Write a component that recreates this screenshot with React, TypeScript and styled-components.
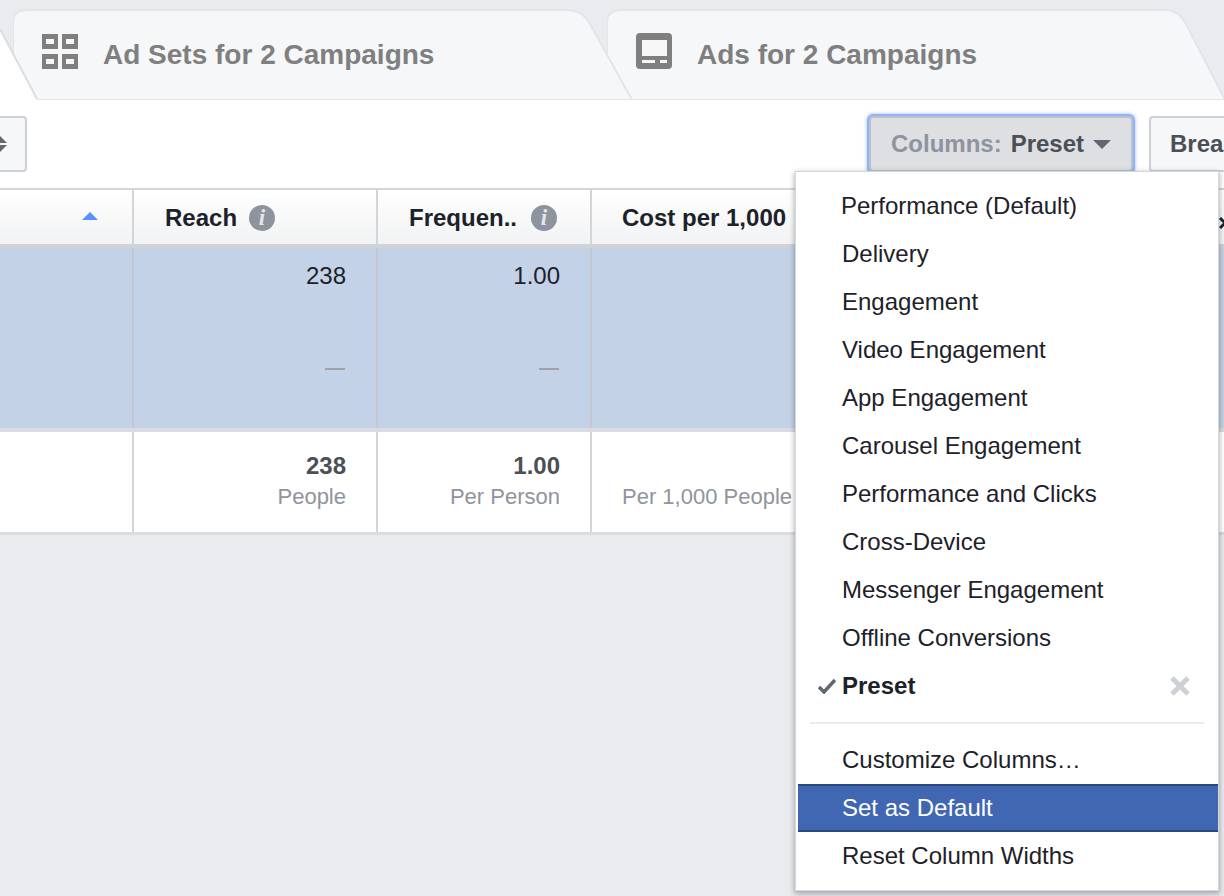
import React from 'react';
import styled, { createGlobalStyle } from 'styled-components';

const GlobalStyle = createGlobalStyle`
  html, body {
    margin: 0;
    padding: 0;
    background: #e9ebee;
  }
  body {
    font-family: "Liberation Sans", Arial, sans-serif;
    color: #1d2129;
  }
`;

const Page = styled.div`
  position: relative;
  width: 1224px;
  height: 896px;
  overflow: hidden;
  background: #e9ebee;
`;

const TabBar = styled.div`
  position: relative;
  display: flex;
  height: 100px;
`;

const TabShape = styled.svg`
  position: absolute;
  left: 0;
  top: 0;
`;

const Tab = styled.div<{ $width: number; $left: number; $z: number }>`
  position: relative;
  z-index: ${(p) => p.$z};
  flex: none;
  width: ${(p) => p.$width}px;
  margin-left: ${(p) => p.$left}px;
  height: 100px;
`;

const TabLabel = styled.div<{ $pad: number; $gap: number }>`
  position: relative;
  display: flex;
  align-items: center;
  gap: ${(p) => p.$gap}px;
  height: 100px;
  padding: 10px 0 0 ${(p) => p.$pad}px;
  box-sizing: border-box;
  font-size: 28px;
  font-weight: 700;
  color: #7f7f7f;
  white-space: nowrap;

  svg {
    margin-bottom: 8px;
  }
`;

const Toolbar = styled.div`
  display: flex;
  align-items: center;
  height: 88px;
  background: #fff;
  padding-bottom: 1px;
  box-sizing: border-box;
`;

const SortButton = styled.div`
  flex: none;
  display: flex;
  align-items: center;
  width: 27px;
  height: 56px;
  margin-right: 842px;
  box-sizing: border-box;
  background: #f6f7f9;
  border: 2px solid #ced0d4;
  border-left: 0;
  border-radius: 0 4px 4px 0;
`;

const ColumnsButton = styled.div`
  flex: none;
  display: flex;
  align-items: center;
  width: 264px;
  height: 56px;
  box-sizing: border-box;
  padding-left: 20px;
  background: #dddfe2;
  border: 2px solid #bcc0c8;
  border-radius: 4px;
  box-shadow: 0 0 0 2px #8fb3fb, 0 0 3px 3px rgba(120, 160, 250, 0.45);
  font-size: 24px;
  font-weight: 700;
  color: #8d949e;
  white-space: nowrap;
`;

const ButtonValue = styled.span`
  margin-left: 9px;
  color: #4b4f56;
`;

const Caret = styled.span`
  width: 0;
  height: 0;
  margin: 2px 0 0 9px;
  border-left: 9px solid transparent;
  border-right: 9px solid transparent;
  border-top: 9px solid #606770;
`;

const BreakButton = styled.div`
  flex: none;
  width: 100px;
  height: 56px;
  margin-left: 16px;
  box-sizing: border-box;
  padding-left: 19px;
  background: #f6f7f9;
  border: 2px solid #ced0d4;
  border-radius: 4px;
  font-size: 24px;
  font-weight: 700;
  line-height: 52px;
  color: #4b4f56;
`;

const columns = '134px 244px 214px 1fr';

const HeaderRow = styled.div`
  display: grid;
  grid-template-columns: ${columns};
  height: 56px;
  box-sizing: border-box;
  border-top: 2px solid #d3d5d8;
  background: linear-gradient(#ffffff, #f1f2f3);
`;

const HeaderCell = styled.div<{ $end?: boolean }>`
  display: flex;
  align-items: center;
  justify-content: ${(p) => (p.$end ? 'flex-end' : 'flex-start')};
  gap: 12px;
  box-sizing: border-box;
  padding: 2px ${(p) => (p.$end ? '34px' : '0')} 0 ${(p) => (p.$end ? '0' : '31px')};
  border-right: 2px solid #d3d5d8;
  font-size: 24px;
  font-weight: 700;
  color: #1d2129;
  white-space: nowrap;

  &:last-child {
    border-right: 0;
    padding-left: 30px;
  }
`;

const SortArrow = styled.span`
  width: 0;
  height: 0;
  margin-bottom: 4px;
  border-left: 8px solid transparent;
  border-right: 8px solid transparent;
  border-bottom: 8px solid #5890ff;
`;

const HeaderClose = styled.svg`
  position: absolute;
  left: 1219px;
  top: 217px;
`;

const InfoBadge = styled.span<{ $shift?: number }>`
  display: inline-flex;
  align-items: center;
  justify-content: center;
  width: 26px;
  height: 26px;
  margin-left: ${(p) => p.$shift ?? 0}px;
  border-radius: 50%;
  background: #8d949e;
  color: #e4e6e9;
  font-family: "Liberation Serif", serif;
  font-size: 23px;
  font-style: italic;
  font-weight: 700;
`;

const DataRow = styled.div`
  display: grid;
  grid-template-columns: ${columns};
  height: 184px;
  box-sizing: border-box;
  background: #c4d2e7;
  border-top: 4px solid #d0d2d5;
`;

const TotalRow = styled.div`
  display: grid;
  grid-template-columns: ${columns};
  height: 107px;
  box-sizing: border-box;
  background: #fff;
  border-top: 4px solid #d9dde2;
  border-bottom: 3px solid #dadcdf;
`;

const Cell = styled.div<{ $selected?: boolean; $start?: boolean }>`
  display: flex;
  flex-direction: column;
  align-items: ${(p) => (p.$start ? 'flex-start' : 'flex-end')};
  box-sizing: border-box;
  padding: 14px ${(p) => (p.$start ? '0 0 30px' : '30px 0 0')};
  border-right: 2px solid ${(p) => (p.$selected ? '#c4c8ce' : '#d3d5d8')};

  &:last-child {
    border-right: 0;
  }
`;

const Value = styled.div`
  font-size: 24px;
  line-height: 28px;
  color: #1d2129;
`;

const Dash = styled.div`
  width: 20px;
  height: 2px;
  margin: 78px 1px 0 0;
  background: #a0a2a6;
`;

const TotalValue = styled.div`
  margin-top: 6px;
  font-size: 24px;
  font-weight: 700;
  line-height: 28px;
  color: #4b4f56;
`;

const TotalUnit = styled.div`
  margin-top: 4px;
  font-size: 22px;
  line-height: 26px;
  color: #90949c;
  white-space: nowrap;
`;

const Menu = styled.div`
  position: absolute;
  z-index: 5;
  left: 795px;
  top: 171px;
  width: 424px;
  height: 720px;
  box-sizing: border-box;
  padding: 10px 0 0;
  background: #fff;
  border: 1px solid #d5d7da;
  box-shadow: 0 2px 5px 1px rgba(0, 0, 0, 0.28);
`;

const MenuItem = styled.div<{ $active?: boolean; $strong?: boolean; $nudge?: number }>`
  display: flex;
  align-items: center;
  height: 48px;
  box-sizing: border-box;
  margin-left: 2px;
  padding-left: ${(p) => 44 - (p.$nudge ?? 0)}px;
  padding-right: 27px;
  font-size: 24px;
  font-weight: ${(p) => (p.$strong ? 700 : 400)};
  color: ${(p) => (p.$active ? '#fff' : '#1d2129')};
  background: ${(p) => (p.$active ? '#4267b2' : 'transparent')};
  border-top: ${(p) => (p.$active ? '2px solid #29487d' : '0')};
  border-bottom: ${(p) => (p.$active ? '2px solid #29487d' : '0')};
  white-space: nowrap;
`;

const CheckSlot = styled.svg`
  width: 18px;
  height: 16px;
  margin-left: -24px;
  margin-right: 6px;
  flex: none;
`;

const RemoveIcon = styled.svg`
  width: 22px;
  height: 22px;
  margin-left: auto;
  flex: none;
`;

const MenuDivider = styled.div`
  height: 2px;
  margin: 12px 14px 12px 14px;
  background: #e9ebee;
`;

const TabOutline = ({ d, fill, line }: { d: string; fill: string; line: string }) => (
  <TabShape width="660" height="100" viewBox="0 0 660 100">
    <path d={d} fill={fill} stroke={line} strokeWidth="2" />
  </TabShape>
);

const GridIcon = () => (
  <svg width="36" height="36" viewBox="0 0 36 36">
    <path
      fillRule="evenodd"
      fill="#7f7f7f"
      d="M0 1H16V16H0Z M4 6V11H12V6Z M20 1H36V16H20Z M24 6V11H32V6Z M0 21H16V36H0Z M4 26V31H12V26Z M20 21H36V36H20Z M24 26V31H32V26Z"
    />
  </svg>
);

const AdIcon = () => (
  <svg width="36" height="36" viewBox="0 0 36 36">
    <rect width="36" height="36" rx="4" fill="#7f7f7f" />
    <rect x="6" y="7" width="25" height="16" fill="#f6f7f9" />
    <rect x="6" y="27" width="13" height="3" fill="#f6f7f9" />
    <rect x="24" y="27" width="7" height="3" fill="#f6f7f9" />
  </svg>
);

const SortChevrons = () => (
  <svg width="7" height="18" viewBox="0 0 7 18">
    <path d="M0 1 L7 8 H0 Z" fill="#606770" />
    <path d="M0 17 L7 10 H0 Z" fill="#606770" />
  </svg>
);

const App = () => {
  const menuItems = [
    'Delivery',
    'Engagement',
    'Video Engagement',
    'App Engagement',
    'Carousel Engagement',
    'Performance and Clicks',
    'Cross-Device',
    'Messenger Engagement',
    'Offline Conversions',
  ];

  return (
    <Page>
      <GlobalStyle />
      <TabBar>
        <Tab $width={0} $left={0} $z={3}>
          <TabOutline d="M-2 26 L37 99 L37 100 H-2 Z" fill="#fff" line="none" />
          <TabShape width="60" height="100" viewBox="0 0 60 100">
            <path d="M0 29 L37 99" fill="none" stroke="#dcdee2" strokeWidth="2" />
          </TabShape>
        </Tab>
        <Tab $width={620} $left={13} $z={2}>
          <TabOutline
            d="M0 100 V22 Q0 10 16 10 H552 Q570 10 577 24 L618 98 L619 100 Z"
            fill="#f6f7f9"
            line="#e3e5e8"
          />
          <TabLabel $pad={29} $gap={25}>
            <GridIcon />
            Ad Sets for 2 Campaigns
          </TabLabel>
        </Tab>
        <Tab $width={618} $left={-26} $z={1}>
          <TabOutline
            d="M0 100 V22 Q0 10 16 10 H556 Q572 10 579 24 L617 98 L618 100 Z"
            fill="#f6f7f9"
            line="#e3e5e8"
          />
          <TabLabel $pad={29} $gap={25}>
            <AdIcon />
            Ads for 2 Campaigns
          </TabLabel>
        </Tab>
      </TabBar>
      <Toolbar>
        <SortButton>
          <SortChevrons />
        </SortButton>
        <ColumnsButton>
          Columns:
          <ButtonValue>Preset</ButtonValue>
          <Caret />
        </ColumnsButton>
        <BreakButton>Breakdown</BreakButton>
      </Toolbar>
      <HeaderRow>
        <HeaderCell $end>
          <SortArrow />
        </HeaderCell>
        <HeaderCell>
          Reach
          <InfoBadge>i</InfoBadge>
        </HeaderCell>
        <HeaderCell>
          Frequen..
          <InfoBadge $shift={2}>i</InfoBadge>
        </HeaderCell>
        <HeaderCell>Cost per 1,000</HeaderCell>
      </HeaderRow>
      <HeaderClose width="12" height="12" viewBox="0 0 12 12">
        <path d="M1 1 L11 11 M11 1 L1 11" stroke="#1d2129" strokeWidth="3" />
      </HeaderClose>
      <DataRow>
        <Cell $selected />
        <Cell $selected>
          <Value>238</Value>
          <Dash />
        </Cell>
        <Cell $selected>
          <Value>1.00</Value>
          <Dash />
        </Cell>
        <Cell $selected />
      </DataRow>
      <TotalRow>
        <Cell />
        <Cell>
          <TotalValue>238</TotalValue>
          <TotalUnit>People</TotalUnit>
        </Cell>
        <Cell>
          <TotalValue>1.00</TotalValue>
          <TotalUnit>Per Person</TotalUnit>
        </Cell>
        <Cell $start>
          <TotalValue>&nbsp;</TotalValue>
          <TotalUnit>Per 1,000 People</TotalUnit>
        </Cell>
      </TotalRow>
      <Menu>
        <MenuItem $nudge={1}>Performance (Default)</MenuItem>
        {menuItems.map((item) => (
          <MenuItem key={item}>{item}</MenuItem>
        ))}
        <MenuItem $strong>
          <CheckSlot viewBox="0 0 18 16">
            <path d="M1 9 L6 14 L17 2" fill="none" stroke="#606770" strokeWidth="3.5" />
          </CheckSlot>
          Preset
          <RemoveIcon viewBox="0 0 22 22">
            <path d="M3 3 L19 19 M19 3 L3 19" stroke="#cdd0d4" strokeWidth="5" />
          </RemoveIcon>
        </MenuItem>
        <MenuDivider />
        <MenuItem>Customize Columns…</MenuItem>
        <MenuItem $active>Set as Default</MenuItem>
        <MenuItem>Reset Column Widths</MenuItem>
      </Menu>
    </Page>
  );
};

export default App;
